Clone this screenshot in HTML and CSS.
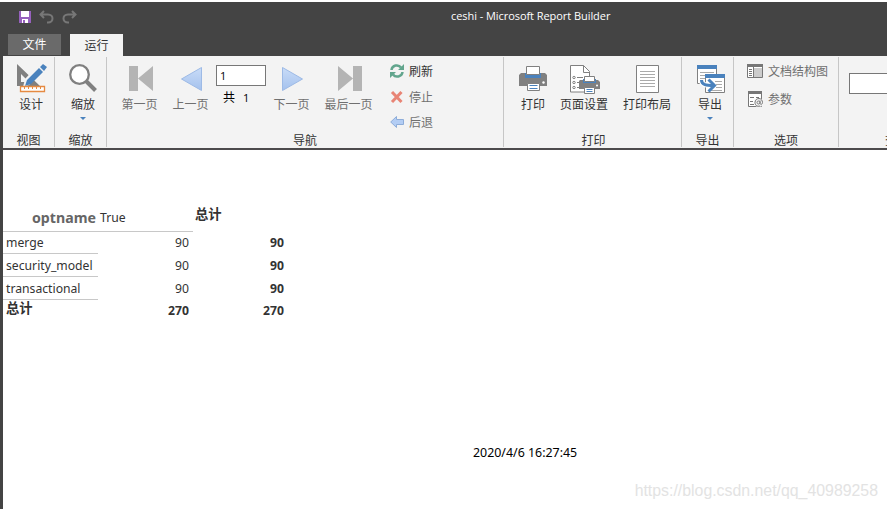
FILE: index.html
```html
<!DOCTYPE html>
<html lang="zh-CN">
<head>
<meta charset="utf-8">
<title>ceshi - Microsoft Report Builder</title>
<link rel="stylesheet" href="styles.css">
</head>
<body>
<div class="window">
  <header class="titlebar">
    <div class="quick">
      <svg width="12" height="12" viewBox="0 0 12 12"><path fill="#9661bd" d="M0 0h12v12H0z"/><path fill="#fff" d="M2 0h8v6H2zM3 8h6v4H3z"/><path fill="#9661bd" d="M4 9h2v3H4z"/></svg>
      <svg width="15" height="14" viewBox="0 0 15 14" fill="none" stroke="#777" stroke-width="2"><path d="M5 1 1.500 4.500 5 8M2 4.500h7c6 0 6 8 0 8H8"/></svg>
      <svg width="15" height="14" viewBox="0 0 15 14" fill="none" stroke="#777" stroke-width="2"><path d="m10 1 3.500 3.500L10 8M13 4.500H6c-6 0-6 8 0 8h1"/></svg>
    </div>
    <div class="caption">ceshi - Microsoft Report Builder</div>
  </header>
  <nav class="tabs"><span class="tab file">文件</span><span class="tab active">运行</span></nav>
  <div class="ribbon">
    <section class="group view">
      <div class="tools">
        <div class="tool"><svg width="32" height="32" viewBox="0 0 32 32"><path fill="#808080" fill-rule="evenodd" d="M2 1 25 23H2zM6 11v8h8z"/><path fill="#f3f3f3" d="m8 24 2-8L26-1l6 5-18 18z"/><path fill="#4a82bd" d="m10 23 2-6L24 5l4 4-12 12zM25 4l3-3 4 3-3 4z"/><path fill="#fff" stroke="#e58a42" stroke-width="1.300" d="M5.500 23.500h24v5h-24z"/><path stroke="#e58a42" d="M9.500 24v2m4-2v2m4-2v2m4-2v2m4-2v2"/></svg><span>设计</span></div>
      </div>
      <div class="name">视图</div>
    </section>
    <section class="group zoom">
      <div class="tools">
        <div class="tool"><svg width="32" height="32" viewBox="0 0 32 32"><path stroke="#808080" stroke-width="4" d="m19 18 9.500 9.500"/><circle cx="12.500" cy="11.500" r="9.300" fill="#fff" stroke="#808080" stroke-width="2.300"/></svg><span>缩放</span><i class="drop"></i></div>
      </div>
      <div class="name">缩放</div>
    </section>
    <section class="group navigate">
      <div class="tools">
        <div class="tool off"><svg width="32" height="32" viewBox="0 0 32 32"><path fill="#b4b4b4" d="M5 3h9v25H5zM29 3v25L14 15.500z"/></svg><span>第一页</span></div>
        <div class="tool off"><svg width="32" height="32" viewBox="0 0 32 32"><defs><linearGradient id="blue" x2="0" y2="1"><stop stop-color="#c9dcf8"/><stop offset="1" stop-color="#a4c1ed"/></linearGradient></defs><path fill="url(#blue)" stroke="#9dbae6" d="M26.500 4.500v23L6.500 16z"/></svg><span>上一页</span></div>
        <div class="pages"><div class="box">1</div><div class="count">共<b>1</b></div></div>
        <div class="tool off"><svg width="32" height="32" viewBox="0 0 32 32"><path fill="url(#blue)" stroke="#9dbae6" d="M6.500 4.500v23l20-11.500z"/></svg><span>下一页</span></div>
        <div class="tool off"><svg width="32" height="32" viewBox="0 0 32 32"><path fill="#b4b4b4" d="M20 3h9v25h-9zM5 3v25l15-12.500z"/></svg><span>最后一页</span></div>
        <div class="list actions">
          <div class="row"><svg width="14" height="14" viewBox="0 0 14 14"><path fill="none" stroke="#62a58d" stroke-width="2.500" d="M1.500 6C2 1 8.500 0 11 3.500M12.500 8C12 13 5.500 14 3 10.500"/><path fill="#62a58d" d="M14 0v6H8zM0 14V8h6z"/></svg><span>刷新</span></div>
          <div class="row off"><svg width="14" height="14" viewBox="0 0 14 14"><path stroke="#e88475" stroke-width="3" d="m2 2 9.500 10m0-10L2 12"/></svg><span>停止</span></div>
          <div class="row off"><svg width="14" height="14" viewBox="0 0 14 14"><path fill="#b3cdf4" stroke="#8eadd9" d="M.7 7 6.500 1.500v3h7v5h-7v3z"/></svg><span>后退</span></div>
        </div>
      </div>
      <div class="name">导航</div>
    </section>
    <section class="group print">
      <div class="tools">
        <div class="tool"><svg width="32" height="32" viewBox="0 0 32 32"><path fill="#808080" d="M4 10h24l2 2v11H2V12z"/><path fill="#4a82bd" d="M8 10h16v5H8z"/><path fill="#fff" stroke="#808080" d="M9.500 3.500h13v8h-13zM10.500 20.500h12v7h-12z"/><path stroke="#4a82bd" d="M12.500 22.500h8m-8 3h8"/><circle cx="26.500" cy="19.500" r="1.200" fill="#fff"/></svg><span>打印</span></div>
        <div class="tool"><svg width="32" height="32" viewBox="0 0 32 32"><path fill="#fff" stroke="#808080" d="M2.500 2.500h13l6 6V29h-19z"/><path fill="none" stroke="#808080" d="M15.500 2.500v7h6M9 14.500h6m-6 5h3m-3 5h3"/><g fill="#fff" stroke="#808080"><circle cx="6" cy="14.500" r="1.200"/><circle cx="6" cy="19.500" r="1.200"/><circle cx="6" cy="24.500" r="1.200"/></g><path fill="#808080" d="M12 17h18l2 2v7H11v-8z"/><path fill="#4a82bd" d="M15 16h13v4H15z"/><path fill="#fff" stroke="#808080" d="M16.500 13.500h10v5h-10zM16.500 24.500h10v6h-10z"/><path stroke="#4a82bd" d="M18.500 26.500h6m-6 2h6"/><circle cx="29" cy="22.500" r="1" fill="#fff"/></svg><span>页面设置</span></div>
        <div class="tool"><svg width="32" height="32" viewBox="0 0 32 32"><path fill="#fff" stroke="#808080" d="M5.500 2.500h22v27h-22z"/><path stroke="#aaa" d="M9 8.500h15m-15 3h15m-15 3h15m-15 3h15m-15 3h15m-15 3h15"/></svg><span>打印布局</span></div>
      </div>
      <div class="name">打印</div>
    </section>
    <section class="group export">
      <div class="tools">
        <div class="tool"><svg width="32" height="32" viewBox="0 0 32 32"><path fill="#fff" stroke="#808080" d="M3.500 4.500h19v16h-19z"/><path fill="#4a82bd" d="M3 2h20v4H3z"/><path stroke="#aaa" d="M6 9.500h14m-14 3h7m-7 3h5"/><path fill="#fff" stroke="#808080" d="M11.500 13.500h19v16h-19z"/><path fill="#4a82bd" d="M11 11h20v4H11z"/><path stroke="#aaa" d="M21 18.500h7m-6 3h6m-6 3h6m-13 3h13"/><path fill="none" stroke="#fff" stroke-width="5" d="M7 17c1 5 5 5.500 11 5.500"/><path fill="none" stroke="#4a82bd" stroke-width="3" d="M7.500 17c0 5 5 5.500 12 5.500m-5-6 6 6-6 6"/></svg><span>导出</span><i class="drop"></i></div>
      </div>
      <div class="name">导出</div>
    </section>
    <section class="group options">
      <div class="tools">
        <div class="list">
          <div class="row off"><svg width="16" height="14" viewBox="0 0 16 14"><path fill="#fff" stroke="#777" d="M.5.5h15v13H.5z"/><path fill="#777" d="M0 0h16v3H0z"/><path fill="#ccc" d="M7 4h8v9H7z"/><path stroke="#777" d="M6.500 3v10M2 5.500h3m-3 2h3m-3 2h3m-3 2h3"/></svg><span>文档结构图</span></div>
          <div class="row off"><svg width="16" height="16" viewBox="0 0 16 16"><path fill="#fff" stroke="#777" d="M1.500.5h13v15h-13z"/><path fill="#777" d="M1 0h14v3H1z"/><path stroke="#777" d="M3 6.500h4m2 0h3m-9 4h3m-3 3h4"/><circle cx="11.500" cy="11.500" r="4.500" fill="#f3f3f3"/><path fill="none" stroke="#777" d="M13 15c-3 1-5-1-5-3.500s2-4 4-4 3.500 2 3.500 4-2 2.500-2.500 1V9.500m0 2c0 2-3 2-3 0s3-2 3 0"/></svg><span>参数</span></div>
        </div>
      </div>
      <div class="name">选项</div>
    </section>
    <section class="group find">
      <div class="tools"><div class="box search"></div></div>
      <div class="name">查找</div>
    </section>
  </div>
  <main class="report">
    <div class="matrix">
      <div class="cell head">optname</div><div class="cell col">True</div><div class="cell sum">总计</div>
      <div class="cell key">merge</div><div class="cell num">90</div><div class="cell num bold">90</div>
      <div class="cell key">security_model</div><div class="cell num">90</div><div class="cell num bold">90</div>
      <div class="cell key">transactional</div><div class="cell num">90</div><div class="cell num bold">90</div>
      <div class="cell total">总计</div><div class="cell num bold">270</div><div class="cell num bold">270</div>
    </div>
    <div class="time">2020/4/6 16:27:45</div>
    <div class="mark">https://blog.csdn.net/qq_40989258</div>
  </main>
</div>
</body>
</html>
```
FILE: styles.css
```css
* { box-sizing: border-box; }
body {
  margin: 0;
  height: 509px;
  overflow: hidden;
  background: #fff;
  color: #333;
  font: 12px/16px "Open Sans", "Noto Sans CJK SC", sans-serif;
}
svg { display: block; flex: none; }
.window { margin-top: 2px; height: 507px; border-left: 3px solid #444; overflow: hidden; }

.titlebar { display: flex; height: 32px; background: #444; color: #fff; }
.quick { display: flex; gap: 8px; width: 448px; padding: 9px 0 0 16px; }
.quick svg + svg { margin-top: -1px; }
.caption { padding-top: 6px; font-size: 11px; letter-spacing: -0.06px; white-space: nowrap; }
.tabs { display: flex; gap: 9px; height: 22px; padding-left: 5px; background: #444; }
.tab { width: 53px; text-align: center; line-height: 22px; }
.tab.file { height: 21px; background: #6a6a6a; color: #fff; }
.tab.active { background: #f3f3f3; line-height: 24px; }

.ribbon { display: flex; height: 94px; background: #f3f3f3; border-bottom: 2px solid #4c4a4c; overflow: hidden; }
.group { display: flex; flex-direction: column; flex: none; border-right: 1px solid #c6c6c6; border-image: linear-gradient(transparent 2px, #c6c6c6 2px, #c6c6c6 90px, transparent 90px) 1; }
.tools { display: flex; height: 76px; padding-top: 7px; }
.name { text-align: center; line-height: 18px; height: 16px; }
.tool { display: flex; flex-direction: column; align-items: center; white-space: nowrap; }
.tool span { line-height: 16px; margin-top: 2px; }
.off { color: #707070; }
.drop { margin-top: 4px; border: 3px solid transparent; border-top-color: #4a82bd; border-bottom: 0; }
.box { height: 21px; border: 1px solid #777; background: #fff; }
.view, .zoom, .export { width: 52px; }
.view .tool, .zoom .tool, .export .tool { margin-left: 12px; }
.navigate { width: 397px; }
.navigate .tool { width: 37px; }
.navigate .tools { padding-left: 14px; }
.navigate .tool:nth-child(2) { margin-left: 14px; }
.pages { width: 50px; margin: 2px 7px 0; color: #000; }
.pages .box { padding-left: 3px; line-height: 19px; font-size: 11px; }
.count { margin-top: 4px; padding-left: 7px; }
.count b { font-weight: 400; font-size: 11px; margin-left: 8px; }
.navigate .tool:nth-child(5) { width: 49px; margin-left: 14px; }
.list { display: flex; flex-direction: column; }
.row { display: flex; align-items: center; gap: 5px; height: 16px; white-space: nowrap; }
.row span { padding-top: 2px; }
.actions { gap: 9.5px; margin-left: 17px; }
.print { width: 178px; }
.print .tool { width: 48px; margin-left: 15px; }
.print .tool:first-child { width: 24px; margin-left: 17px; }
.print .name { padding-left: 2px; }
.options { width: 105px; }
.options .list { gap: 12px; margin-left: 13px; }
.find { width: 116px; border: 0; }
.search { width: 100px; margin: 10px 0 0 10px; }

.report { height: 359px; color: #333; font: 12.2px/18px "Noto Sans", "Noto Sans CJK SC", sans-serif; padding-top: 54px; }
.matrix { display: grid; grid-template-columns: repeat(3, 95px); grid-template-rows: 28px 22px 23px 23px 22px; }
.cell { padding: 3px 4px 0 3px; white-space: nowrap; }
.head { padding: 5px 2px 0 0; text-align: right; font-size: 14.2px; font-weight: 700; color: #666; }
.col { padding: 5px 0 0 2px; }
.head, .col, .key { border-bottom: 1px solid #c8c8c8; }
.key:nth-child(4), .key:nth-child(4) ~ .num:nth-child(-n+6) { padding-top: 2px; }
.sum { padding: 1px 0 0 2px; font-size: 13.3px; font-weight: 700; }
.num { text-align: right; }
.bold, .total { font-weight: 700; }
.total { padding-top: 0; font-size: 13.3px; line-height: 16px; }
.total ~ .num { padding-top: 2px; }
.time { margin: 122px 0 0 470px; font-size: 12.4px; color: #000; }
.mark { margin: 20px 9px 0 0; text-align: right; font: 15.87px/18px "Liberation Sans", sans-serif; color: #e3e3e3; }
```
